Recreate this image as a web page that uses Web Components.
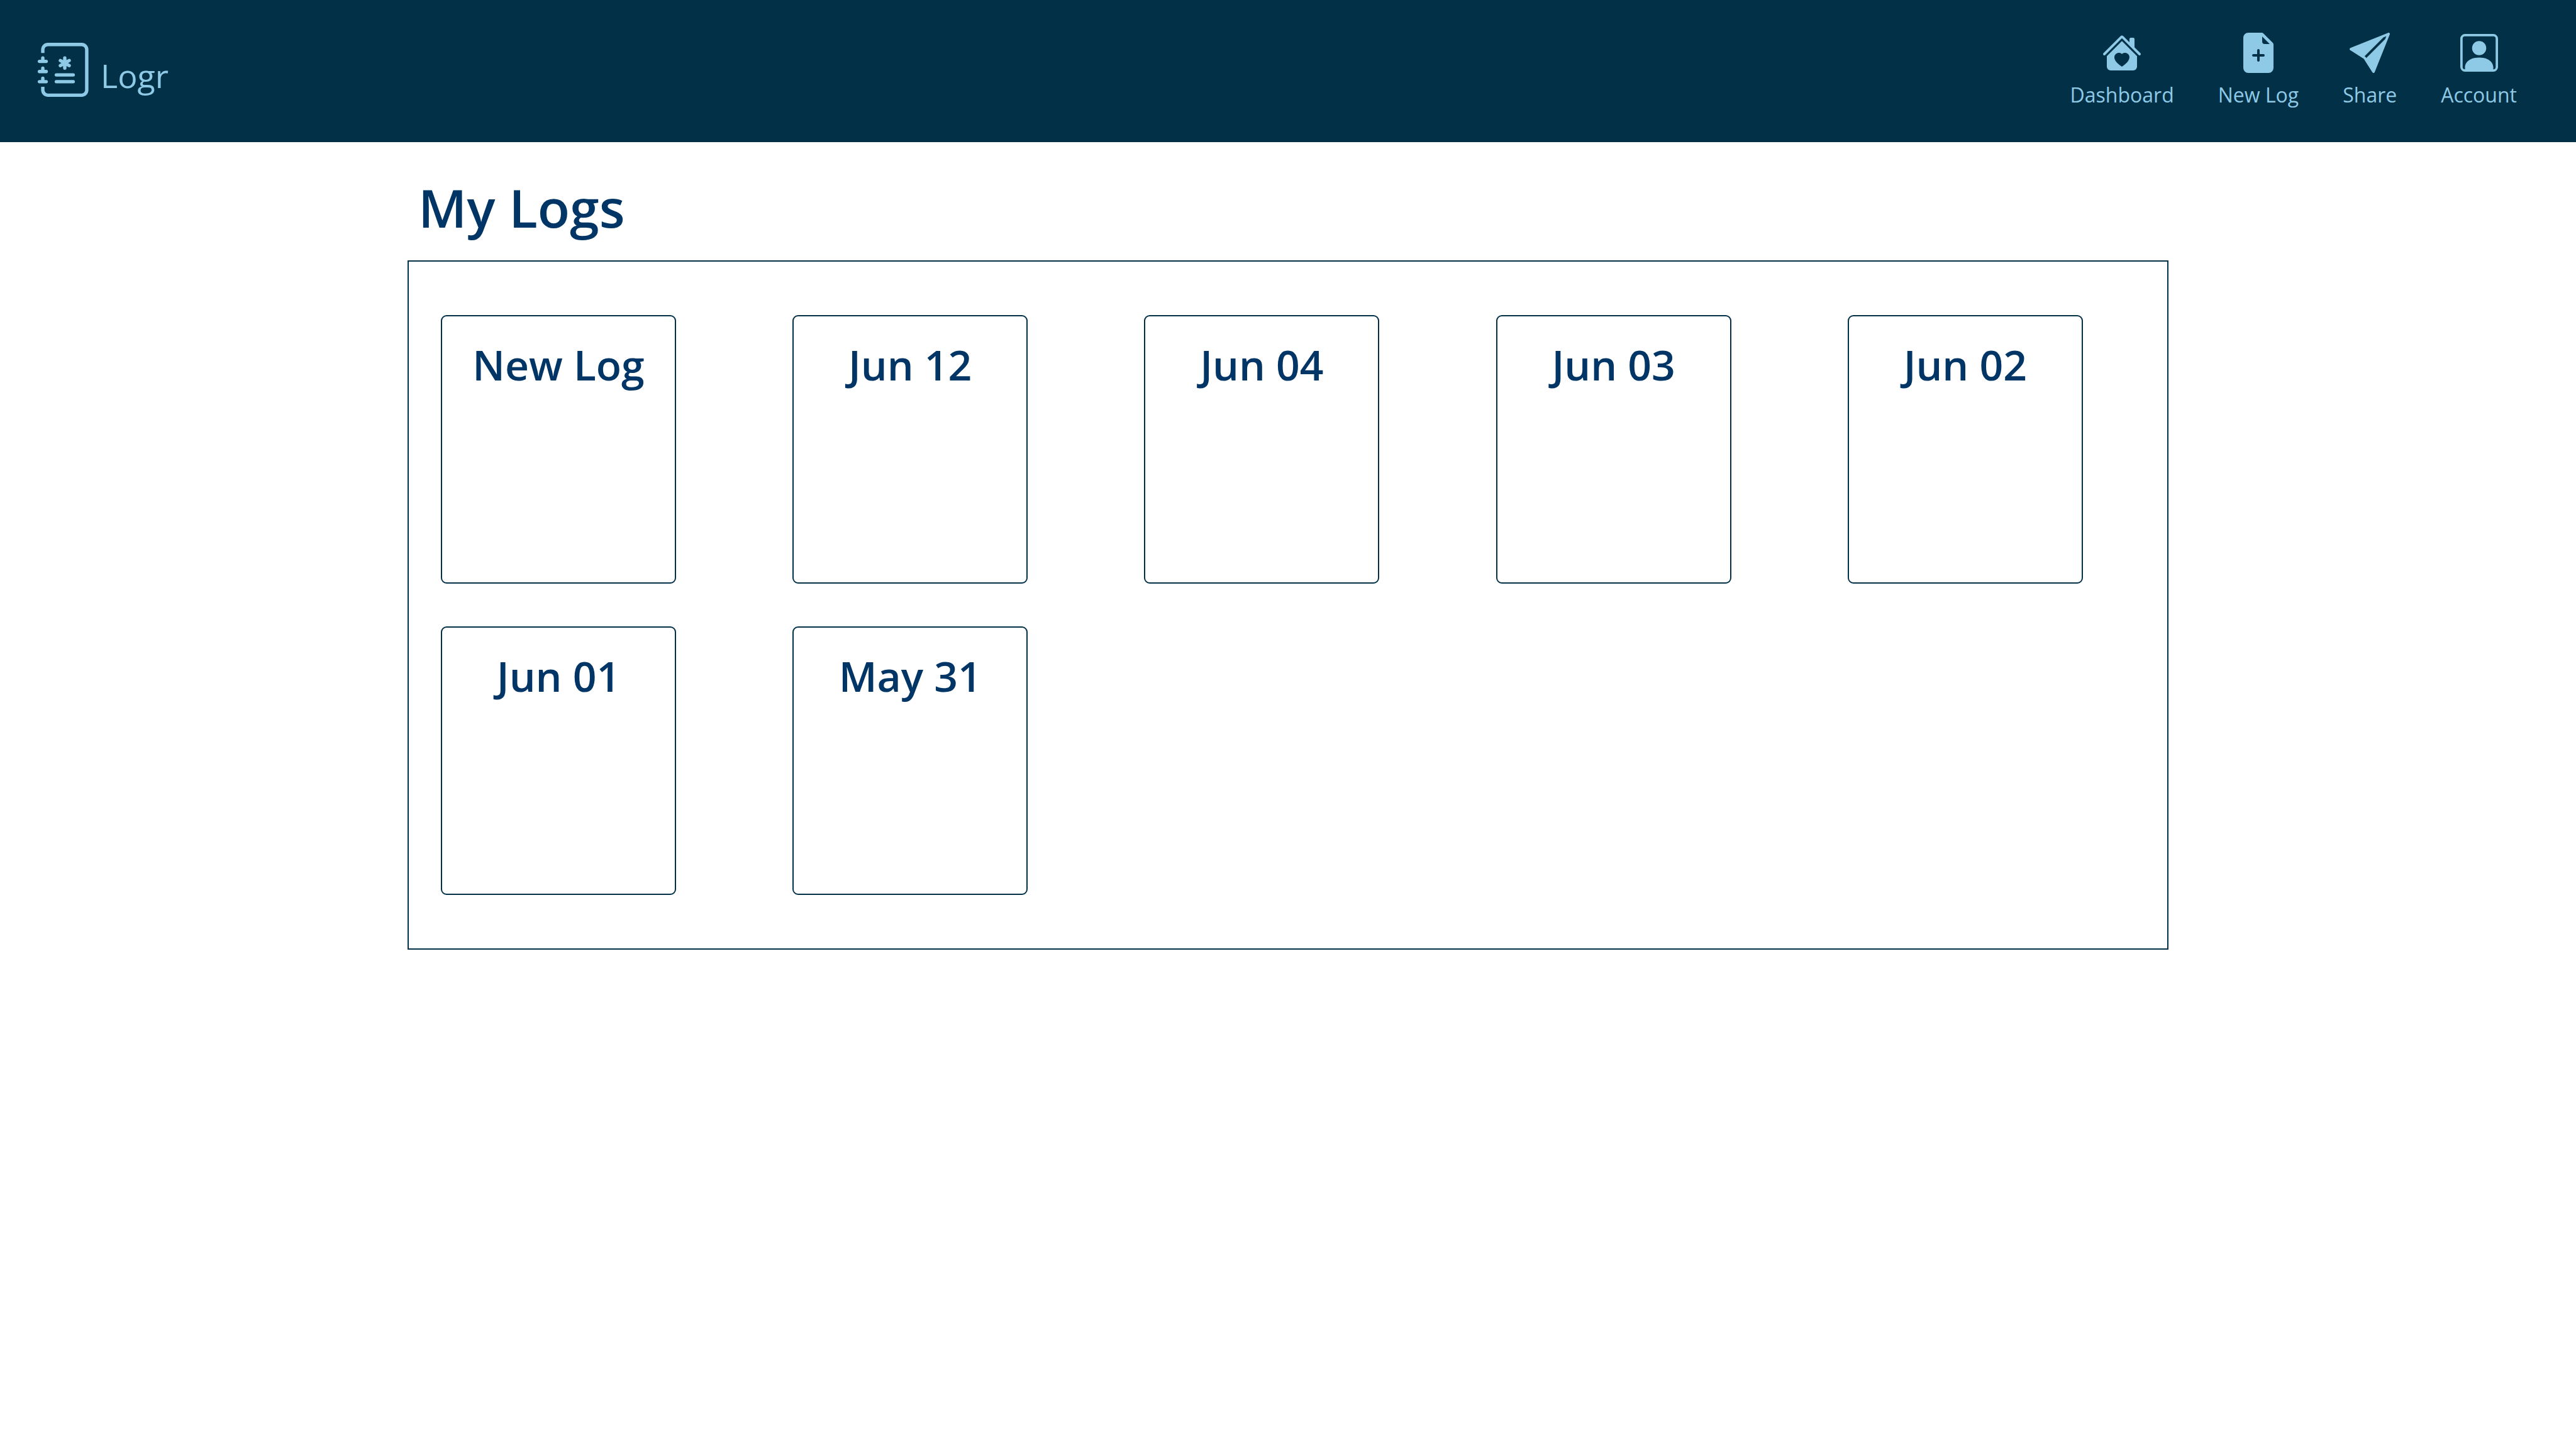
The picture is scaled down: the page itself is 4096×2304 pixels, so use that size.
<!DOCTYPE html>
<html lang="en">
<head>
<meta charset="utf-8">
<meta name="viewport" content="width=device-width, initial-scale=1">
<title>Logr</title>
<style>
  :root {
    --navy: #023047;
    --sky: #8ecae6;
    --ink: #003566;
  }
  body {
    margin: 0;
    background: #fff;
    color: var(--ink);
    font-family: "Open Sans", "Noto Sans", sans-serif;
  }
</style>
</head>
<body>
<logr-header>
  <logr-brand slot="brand">Logr</logr-brand>
  <logr-nav-item icon="dashboard">Dashboard</logr-nav-item>
  <logr-nav-item icon="new">New Log</logr-nav-item>
  <logr-nav-item icon="share">Share</logr-nav-item>
  <logr-nav-item icon="account">Account</logr-nav-item>
</logr-header>
<logr-board>
  <span slot="title">My Logs</span>
  <logr-card>New Log</logr-card>
  <logr-card>Jun 12</logr-card>
  <logr-card>Jun 04</logr-card>
  <logr-card>Jun 03</logr-card>
  <logr-card>Jun 02</logr-card>
  <logr-card>Jun 01</logr-card>
  <logr-card>May 31</logr-card>
</logr-board>
<script>
const ICONS = {
  dashboard: '<path d="M7.293 1.5a1 1 0 0 1 1.414 0L11 3.793V2.5a.5.5 0 0 1 .5-.5h1a.5.5 0 0 1 .5.5v3.293l2.354 2.353a.5.5 0 0 1-.708.707L8 2.207 1.354 8.853a.5.5 0 1 1-.708-.707z"/><path d="m14 9.293-6-6-6 6V13.5A1.5 1.5 0 0 0 3.5 15h9a1.5 1.5 0 0 0 1.5-1.5zm-6-.811c1.664-1.673 5.825 1.254 0 5.018-5.825-3.764-1.664-6.691 0-5.018"/>',
  new: '<path d="M9.293 0H4a2 2 0 0 0-2 2v12a2 2 0 0 0 2 2h8a2 2 0 0 0 2-2V4.707A1 1 0 0 0 13.707 4L10 .293A1 1 0 0 0 9.293 0M9.5 3.5v-2l3 3h-2a1 1 0 0 1-1-1M8.5 7v1.5H10a.5.5 0 0 1 0 1H8.5V11a.5.5 0 0 1-1 0V9.5H6a.5.5 0 0 1 0-1h1.5V7a.5.5 0 0 1 1 0"/>',
  share: '<path d="M15.964.686a.5.5 0 0 0-.65-.65L.767 5.855H.766l-.452.18a.5.5 0 0 0-.082.887l.41.26.001.002 4.995 3.178 3.178 4.995.002.002.26.41a.5.5 0 0 0 .886-.083zm-1.833 1.89L6.637 10.07l-.215-.338a.5.5 0 0 0-.154-.154l-.338-.215 7.494-7.494 1.178-.471z"/>',
  account: '<path d="M11 6a3 3 0 1 1-6 0 3 3 0 0 1 6 0"/><path d="M2 0a2 2 0 0 0-2 2v12a2 2 0 0 0 2 2h12a2 2 0 0 0 2-2V2a2 2 0 0 0-2-2zm12 1a1 1 0 0 1 1 1v12a1 1 0 0 1-1 1v-1c0-1-1-4-6-4s-6 3-6 4v1a1 1 0 0 1-1-1V2a1 1 0 0 1 1-1z"/>'
};

class LogrElement extends HTMLElement {
  constructor() {
    super();
    this.attachShadow({ mode: "open" });
  }
  connectedCallback() {
    this.shadowRoot.innerHTML = this.render();
  }
}

customElements.define("logr-header", class extends LogrElement {
  render() {
    return `<style>
      :host { display: block; background: var(--navy); color: var(--sky); }
      header { display: flex; align-items: center; justify-content: space-between; min-height: 226px; padding: 0 94px 0 60px; box-sizing: border-box; }
      nav { display: flex; gap: 70px; }
    </style>
    <header><slot name="brand"></slot><nav aria-label="Main"><slot></slot></nav></header>`;
  }
});

customElements.define("logr-brand", class extends LogrElement {
  render() {
    return `<style>
      :host { display: block; }
      a { display: flex; align-items: flex-end; gap: 14px; padding-bottom: 4px; color: inherit; text-decoration: none; font-size: 52px; line-height: 68px; }
      svg { width: 86px; height: 86px; fill: currentColor; }
    </style>
    <a href="#"><svg viewBox="0 0 16 16" aria-hidden="true">
      <path d="M8 4a.5.5 0 0 1 .5.5v.634l.549-.317a.5.5 0 1 1 .5.866L9 6l.549.317a.5.5 0 1 1-.5.866L8.5 6.866V7.5a.5.5 0 0 1-1 0v-.634l-.549.317a.5.5 0 1 1-.5-.866L7 6l-.549-.317a.5.5 0 0 1 .5-.866l.549.317V4.5A.5.5 0 0 1 8 4M5 9.5a.5.5 0 0 1 .5-.5h5a.5.5 0 0 1 0 1h-5a.5.5 0 0 1-.5-.5m0 2a.5.5 0 0 1 .5-.5h5a.5.5 0 0 1 0 1h-5a.5.5 0 0 1-.5-.5"/>
      <path d="M3 0h10a2 2 0 0 1 2 2v12a2 2 0 0 1-2 2H3a2 2 0 0 1-2-2v-1h1v1a1 1 0 0 0 1 1h10a1 1 0 0 0 1-1V2a1 1 0 0 0-1-1H3a1 1 0 0 0-1 1v1H1V2a2 2 0 0 1 2-2"/>
      <path d="M1 5v-.5a.5.5 0 0 1 1 0V5h.5a.5.5 0 0 1 0 1h-2a.5.5 0 0 1 0-1zm0 3v-.5a.5.5 0 0 1 1 0V8h.5a.5.5 0 0 1 0 1h-2a.5.5 0 0 1 0-1zm0 3v-.5a.5.5 0 0 1 1 0v.5h.5a.5.5 0 0 1 0 1h-2a.5.5 0 0 1 0-1z"/>
    </svg><slot></slot></a>`;
  }
});

customElements.define("logr-nav-item", class extends LogrElement {
  render() {
    const name = this.getAttribute("icon");
    return `<style>
      :host { display: block; }
      a { display: flex; flex-direction: column; align-items: center; gap: 11px; color: inherit; text-decoration: none; font-size: 32px; line-height: 48px; }
      .icon { display: grid; place-items: center; height: 64px; }
      svg { width: 64px; height: 64px; fill: currentColor; }
      .account { width: 60px; height: 60px; }
    </style>
    <a href="#${name}"><span class="icon"><svg class="${name}" viewBox="0 0 16 16" aria-hidden="true">${ICONS[name]}</svg></span><slot></slot></a>`;
  }
});

customElements.define("logr-board", class extends LogrElement {
  render() {
    return `<style>
      :host { display: block; max-width: 2800px; margin: 0 auto; padding-top: 54px; }
      h1 { margin: 0 0 34px; padding-left: 17px; font-size: 84px; line-height: 100px; font-weight: 600; }
      section { display: grid; grid-template-columns: repeat(5, 1fr); row-gap: 68px; padding: 85px 0; border: 2px solid var(--navy); }
    </style>
    <main><h1><slot name="title"></slot></h1><section><slot></slot></section></main>`;
  }
});

customElements.define("logr-card", class extends LogrElement {
  render() {
    return `<style>
      :host { display: block; padding-left: 51px; }
      a { display: block; box-sizing: border-box; width: 374px; max-width: 100%; min-height: 427px; padding-top: 36px; border: 2px solid var(--navy); border-radius: 9px; color: inherit; text-decoration: none; text-align: center; }
      h2 { margin: 0; font-size: 66px; line-height: 80px; font-weight: 600; }
    </style>
    <a href="#"><h2><slot></slot></h2></a>`;
  }
});
</script>
</body>
</html>
